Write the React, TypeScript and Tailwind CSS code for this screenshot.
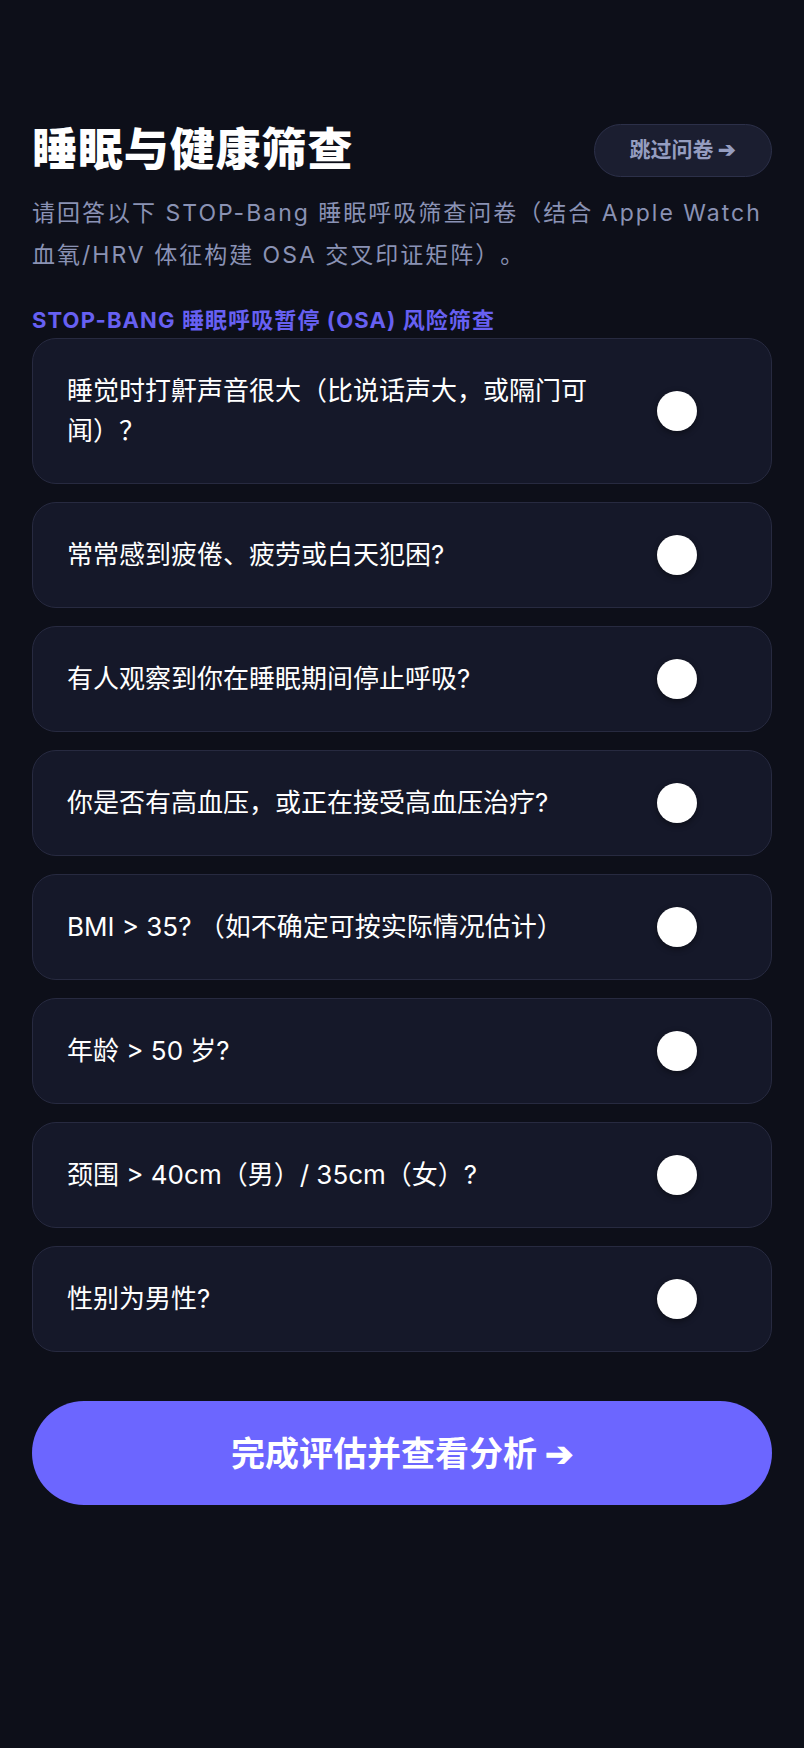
import React from "react";

const questions = [
  "睡觉时打鼾声音很大（比说话声大，或隔门可闻）？",
  "常常感到疲倦、疲劳或白天犯困?",
  "有人观察到你在睡眠期间停止呼吸?",
  "你是否有高血压，或正在接受高血压治疗?",
  "BMI > 35? （如不确定可按实际情况估计）",
  "年龄 > 50 岁?",
  "颈围 > 40cm（男）/ 35cm（女）?",
  "性别为男性?",
];

export default function App() {
  return (
    <div
      className="min-h-[1748px] w-full bg-[#0d0f19] px-8 pt-[122px] pb-[200px] [text-spacing-trim:space-all]"
      style={{ fontFamily: 'Inter, "Noto Sans CJK SC", sans-serif' }}
    >
      <div className="flex items-center justify-between">
        <h1 className="text-[45px] leading-[56px] font-black text-white tracking-[0.02em]">
          睡眠与健康筛查
        </h1>
        <button className="h-[53px] w-[178px] rounded-full border border-[#2c3049] bg-[#1b1e30] text-[21px] font-bold text-[#959dc0] flex items-center justify-center">
          跳过问卷 ➔
        </button>
      </div>
      <p className="mt-[14px] text-[23px] leading-[42px] tracking-[2px] text-[#8a92b4]">
        请回答以下 STOP-Bang 睡眠呼吸筛查问卷（结合 Apple Watch 血氧/HRV 体征构建 OSA 交叉印证矩阵）。
      </p>
      <div className="mt-[30px] text-[22px] leading-[28px] font-bold tracking-[0.05em] text-[#6760f2]">
        STOP-BANG 睡眠呼吸暂停 (OSA) 风险筛查
      </div>
      <div className="mt-[4px] flex flex-col gap-[18px]">
        {questions.map((q) => (
          <div
            key={q}
            className="flex items-center rounded-[24px] border border-[#272a40] bg-[#151829] px-[34px] py-8"
          >
            <div className="w-[528px] text-[26px] leading-[40px] text-white">{q}</div>
            <div className="ml-auto mr-[40px] h-10 w-10 rounded-full bg-white shadow-[0_2px_6px_rgba(0,0,0,0.45)]" />
          </div>
        ))}
      </div>
      <button className="mt-[49px] h-[104px] w-full rounded-full bg-[#6c66ff] text-[34px] font-bold text-white">
        完成评估并查看分析 ➔
      </button>
    </div>
  );
}
